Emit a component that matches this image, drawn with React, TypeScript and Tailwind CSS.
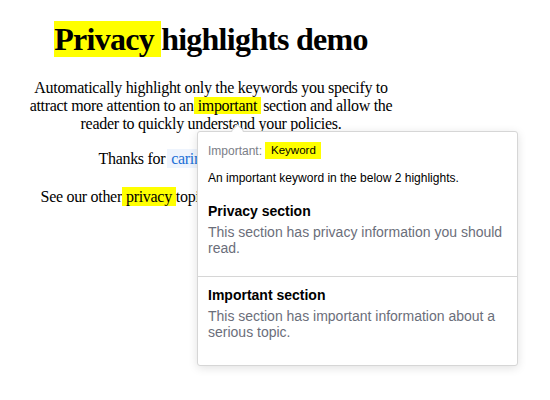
import React from "react";

export default function App() {
  return (
    <div className="relative w-[550px] h-[400px] bg-white overflow-hidden" style={{ fontFamily: '"Liberation Serif", serif' }}>
      <div className="w-[422px] text-center text-black">
        <h1 className="mt-[21px] mb-[21px] text-[32px] font-bold leading-[37px] tracking-[-0.75px]">
          <span className="bg-[#ffff00]">Privacy </span>highlights demo
        </h1>
        <p className="mx-auto w-[380px] text-[16px] leading-[18px] tracking-[-0.3px]">
          Automatically highlight only the keywords you specify to attract more attention to an
          <span className="bg-[#ffff00] px-[4px] mr-[2px]">important</span>section and allow the reader to quickly understand your policies.
        </p>
        <p className="mt-[17px] text-[16px] leading-[18px] tracking-[-0.3px]">
          Thanks for<span className="ml-[2px] pl-[4px] bg-[#eef4fd] text-[#1a6fd6] py-[1px]">caring about your policy.</span>
        </p>
        <p className="mt-[20px] text-[16px] leading-[18px] tracking-[-0.3px]">
          See our other<span className="bg-[#ffff00] px-[4px] py-[1px]">privacy</span>topics for even more information.
        </p>
      </div>

      <div
        className="absolute left-[197px] top-[131px] w-[321px] h-[235px] bg-white border border-[#d6d6d6] rounded-[3px] shadow-[0_2px_10px_rgba(0,0,0,0.12)]"
        style={{ fontFamily: '"Liberation Sans", Arial, sans-serif' }}
      >
        <div className="absolute -top-[6px] left-[35px] w-[9px] h-[9px] bg-white border-l border-t border-[#d6d6d6] rotate-45" />
        <div className="px-[10px] pt-[10px]">
          <div className="flex items-center h-[17px]">
            <span className="text-[12px] text-[#7b7e87]">Important:</span>
            <span className="ml-[3px] bg-[#ffff00] h-[17px] pl-[6px] pr-[5px] flex items-center text-[11.5px] text-black">Keyword</span>
          </div>
          <div className="mt-[12px] text-[12px] leading-[14px] text-black">An important keyword in the below 2 highlights.</div>
        </div>
        <div className="px-[10px] pt-[18px] pb-[20px]">
          <div className="text-[14px] leading-[16px] font-bold text-black">Privacy section</div>
          <div className="mt-[5px] text-[14px] leading-[16px] text-[#6b6e7a]">
            This section has privacy information you should read.
          </div>
        </div>
        <div className="border-t border-[#d6d6d6] px-[10px] pt-[10px]">
          <div className="text-[14px] leading-[16px] font-bold text-black">Important section</div>
          <div className="mt-[5px] text-[14px] leading-[16px] text-[#6b6e7a]">
            This section has important information about a serious topic.
          </div>
        </div>
      </div>
    </div>
  );
}
